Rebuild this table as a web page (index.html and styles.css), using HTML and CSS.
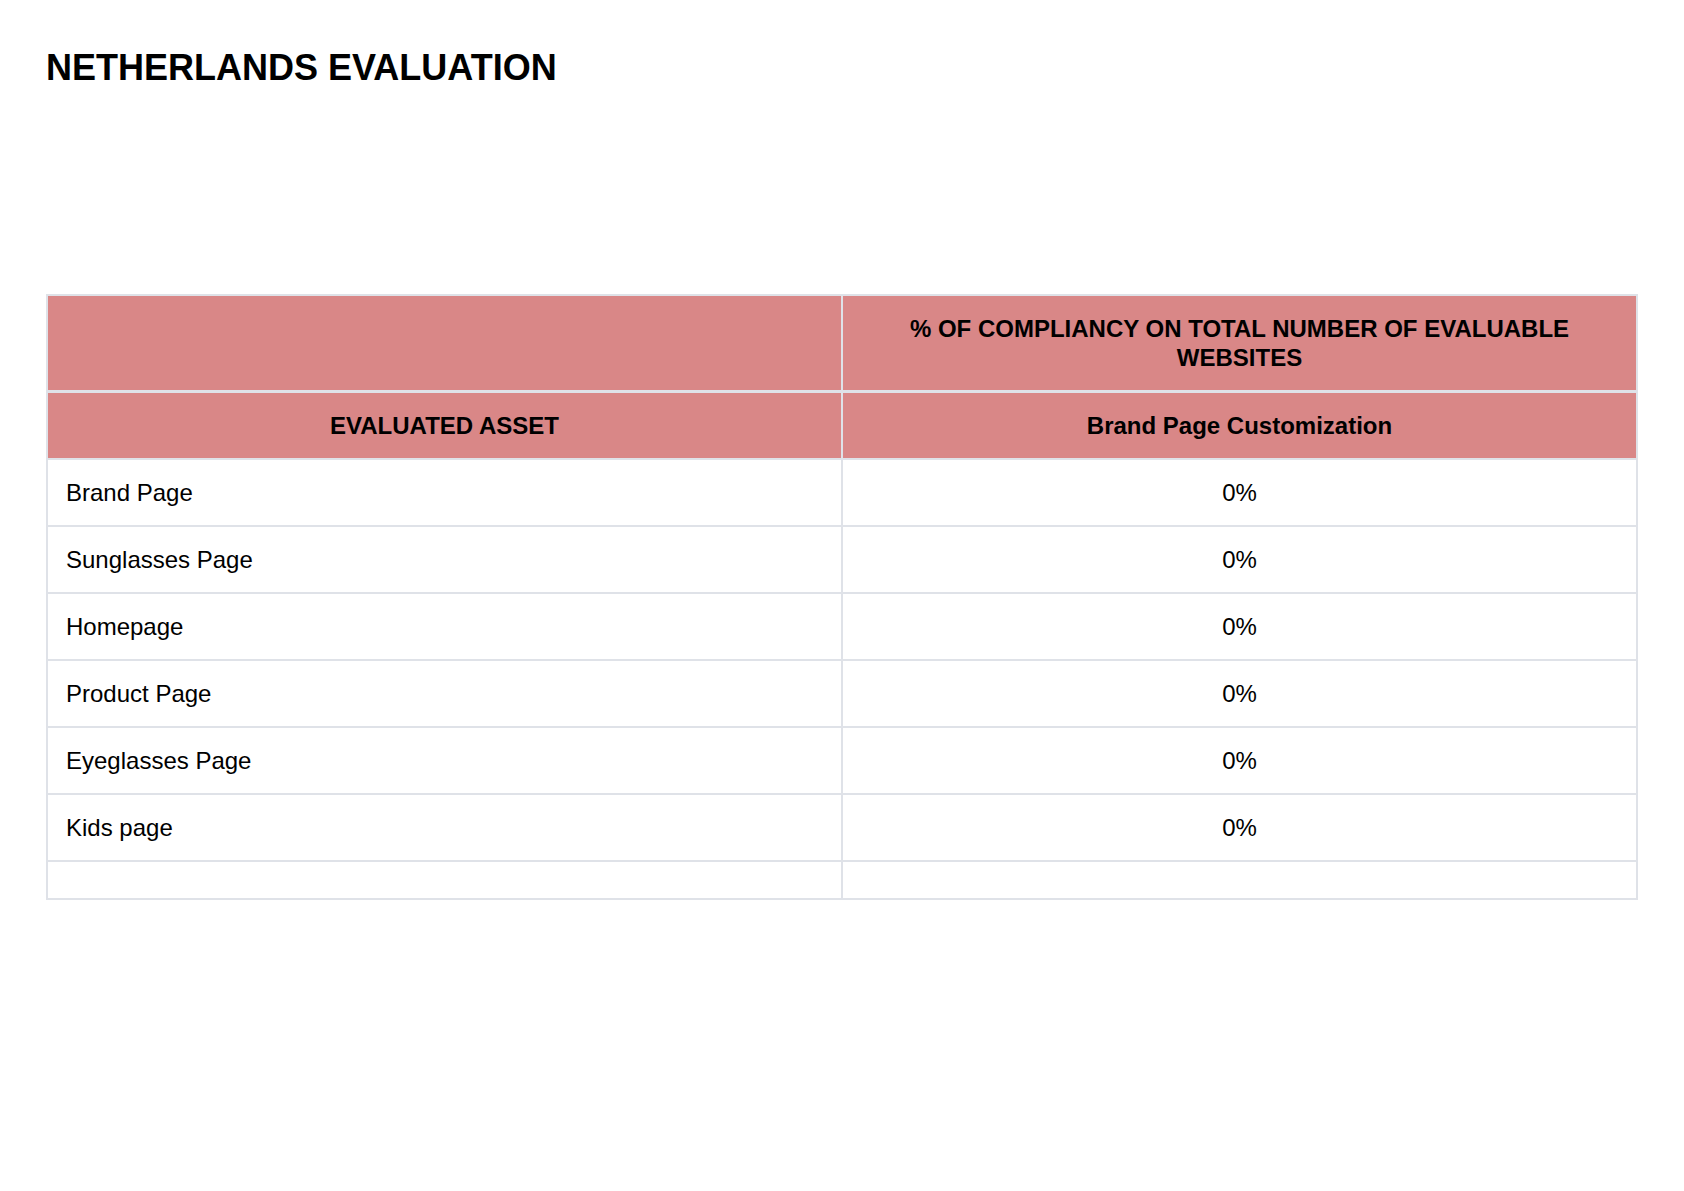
FILE: index.html
```html
<!DOCTYPE html>
<html lang="en">
<head>
<meta charset="utf-8">
<title>Netherlands Evaluation</title>
<link rel="stylesheet" href="styles.css">
</head>
<body>
<main class="page">
  <h1 class="title">NETHERLANDS EVALUATION</h1>
  <table class="eval-table">
    <colgroup>
      <col class="col-asset">
      <col class="col-value">
    </colgroup>
    <thead>
      <tr class="head-top">
        <th></th>
        <th>% OF COMPLIANCY ON TOTAL NUMBER OF EVALUABLE WEBSITES</th>
      </tr>
      <tr class="head-sub">
        <th>EVALUATED ASSET</th>
        <th>Brand Page Customization</th>
      </tr>
    </thead>
    <tbody>
      <tr><td class="asset">Brand Page</td><td class="value">0%</td></tr>
      <tr><td class="asset">Sunglasses Page</td><td class="value">0%</td></tr>
      <tr><td class="asset">Homepage</td><td class="value">0%</td></tr>
      <tr><td class="asset">Product Page</td><td class="value">0%</td></tr>
      <tr><td class="asset">Eyeglasses Page</td><td class="value">0%</td></tr>
      <tr><td class="asset">Kids page</td><td class="value">0%</td></tr>
      <tr class="empty-row"><td></td><td></td></tr>
    </tbody>
  </table>
</main>
</body>
</html>
```
FILE: styles.css
```css
html, body {
  margin: 0;
  padding: 0;
  background: #ffffff;
}

body {
  font-family: "Liberation Sans", Arial, sans-serif;
  color: #000000;
}

.page {
  padding: 48px 46px 0 46px;
}

.title {
  margin: 0 0 206px 0;
  font-size: 36px;
  line-height: 40px;
  font-weight: 700;
  letter-spacing: 0;
}

.eval-table {
  width: 100%;
  border-collapse: collapse;
  table-layout: fixed;
  font-size: 24px;
}

.col-asset,
.col-value {
  width: 50%;
}

.eval-table th,
.eval-table td {
  border: 2px solid #dfe2e8;
  padding: 18px 18px;
  line-height: 29px;
  vertical-align: middle;
}

.eval-table th {
  background: #d98787;
  font-weight: 700;
  text-align: center;
}

.head-top th {
  line-height: 29px;
  border-bottom-width: 3px;
}

.asset {
  text-align: left;
}

.value {
  text-align: center;
}

.empty-row td {
  padding: 18px 18px;
  height: 0;
}
```
